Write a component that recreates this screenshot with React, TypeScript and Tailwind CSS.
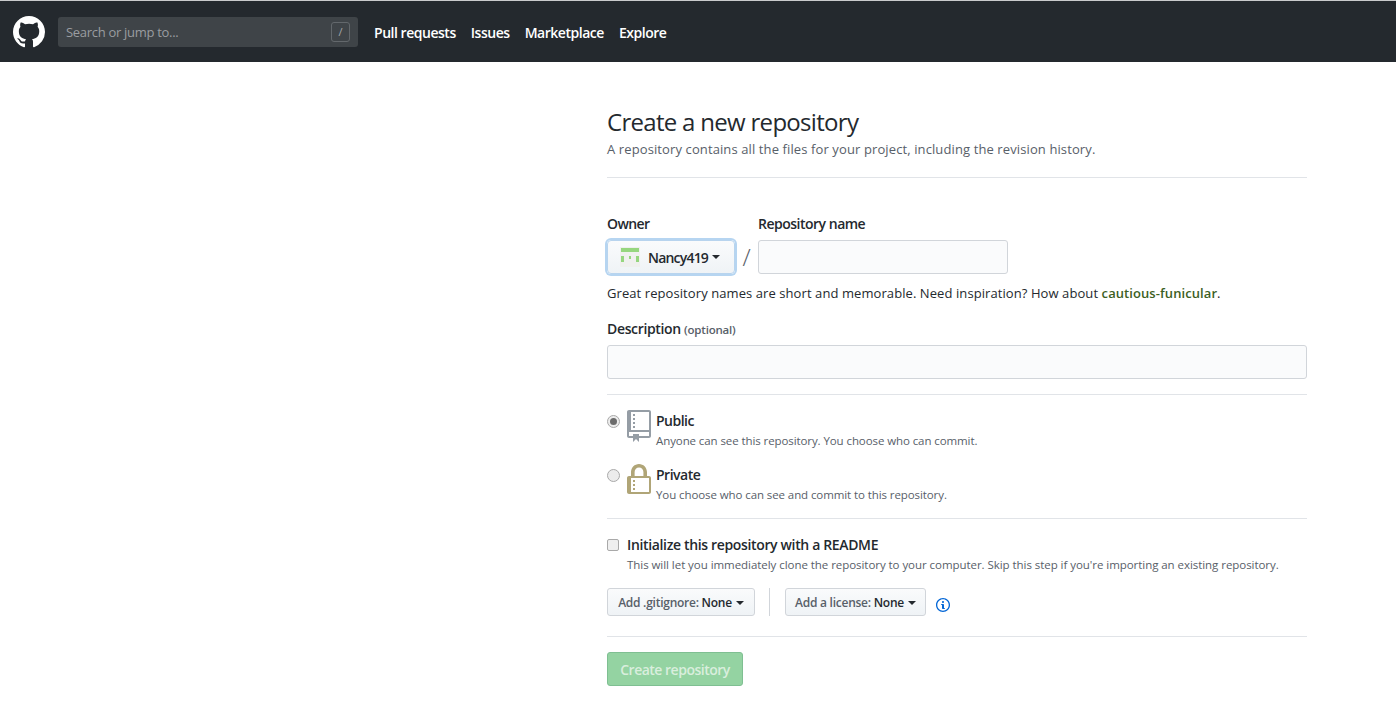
import React from 'react';

const font = { fontFamily: '"Open Sans", sans-serif' };

const Caret = () => (
  <span className="inline-block ml-1 w-0 h-0 border-x-4 border-t-4 border-x-transparent border-t-[#24292e] align-middle" />
);

const Divider = () => <hr className="border-0 border-t border-[#e1e4e8]" />;

const GithubMark = () => (
  <svg viewBox="0 0 16 16" className="w-8 h-8" fill="#ffffff">
    <path d="M8 0C3.58 0 0 3.58 0 8c0 3.54 2.29 6.53 5.47 7.59.4.07.55-.17.55-.38 0-.19-.01-.82-.01-1.49-2.01.37-2.53-.49-2.69-.94-.09-.23-.48-.94-.82-1.13-.28-.15-.68-.52-.01-.53.63-.01 1.08.58 1.23.82.72 1.21 1.87.87 2.33.66.07-.52.28-.87.51-1.07-1.78-.2-3.64-.89-3.64-3.95 0-.87.31-1.59.82-2.15-.08-.2-.36-1.02.08-2.12 0 0 .67-.21 2.2.82.64-.18 1.32-.27 2-.27.68 0 1.36.09 2 .27 1.53-1.04 2.2-.82 2.2-.82.44 1.1.16 1.92.08 2.12.51.56.82 1.27.82 2.15 0 3.07-1.87 3.75-3.65 3.95.29.25.54.73.54 1.48 0 1.07-.01 1.93-.01 2.2 0 .21.15.46.55.38A8.013 8.013 0 0016 8c0-4.42-3.58-8-8-8z" />
  </svg>
);

const RepoIcon = () => (
  <svg viewBox="0 0 12 16" className="w-6 h-8" fill="#959da5">
    <path d="M4 9H3V8h1v1zm0-3H3v1h1V6zm0-2H3v1h1V4zm0-2H3v1h1V2zm8-1v12c0 .55-.45 1-1 1H6v2l-1.5-1.5L3 16v-2H1c-.55 0-1-.45-1-1V1c0-.55.45-1 1-1h10c.55 0 1 .45 1 1zm-1 10H1v2h2v-1h3v1h5v-2zm0-10H2v9h9V1z" />
  </svg>
);

const LockIcon = () => (
  <svg viewBox="0 0 12 16" className="w-6 h-8" fill="#b0a577">
    <path d="M4 13H3v-1h1v1zm8-6v7c0 .55-.45 1-1 1H1c-.55 0-1-.45-1-1V7c0-.55.45-1 1-1h1V4c0-2.2 1.8-4 4-4s4 1.8 4 4v2h1c.55 0 1 .45 1 1zM3.8 6h4.41V4c0-1.22-.98-2.2-2.2-2.2-1.22 0-2.2.98-2.2 2.2v2H3.8zM11 7H2v7h9V7zM4 8H3v1h1V8zm0 2H3v1h1v-1z" />
  </svg>
);

const InfoIcon = () => (
  <svg viewBox="0 0 14 16" className="w-[14px] h-4" fill="#0366d6">
    <path d="M6.3 5.69a.942.942 0 01-.28-.7c0-.28.09-.52.28-.7.19-.18.42-.28.7-.28.28 0 .52.09.7.28.18.19.28.42.28.7 0 .28-.09.52-.28.7a1 1 0 01-.7.3c-.28 0-.52-.11-.7-.3zM8 7.99c-.02-.25-.11-.48-.31-.69-.2-.19-.42-.3-.69-.31H6c-.27.02-.48.13-.69.31-.2.2-.3.44-.31.69h1v3c.02.27.11.5.31.69.2.2.42.31.69.31h1c.27 0 .48-.11.69-.31.2-.19.3-.42.31-.69H8V7.98v.01zM7 2.3c-3.14 0-5.7 2.54-5.7 5.68 0 3.14 2.56 5.7 5.7 5.7s5.7-2.55 5.7-5.7c0-3.15-2.56-5.69-5.7-5.69v.01zM7 .98c3.86 0 7 3.14 7 7s-3.14 7-7 7-7-3.12-7-7 3.14-7 7-7z" />
  </svg>
);

const OwnerAvatar = () => (
  <svg viewBox="0 0 20 20" className="w-5 h-5">
    <rect width="20" height="20" fill="#f0f0ee" />
    <rect x="1" y="1" width="18" height="4" fill="#96d67e" />
    <rect x="1" y="9" width="3" height="6" fill="#96d67e" />
    <rect x="9" y="9" width="2" height="3" fill="#96d67e" />
    <rect x="16" y="9" width="3" height="6" fill="#96d67e" />
  </svg>
);

const HeaderNav = () => (
  <header className="h-[62px] box-border border-t border-[#c9cbcc] pt-px bg-[#24292e] flex items-center pl-[13px]">
    <GithubMark />
    <div className="ml-[13px] w-[300px] h-[30px] bg-[#3f4448] rounded-[3px] flex items-center justify-between pl-2 pr-2">
      <span className="pt-px text-[13px] text-[#9a9da0] tracking-[-0.3px]">Search or jump to...</span>
      <span className="w-[19px] h-5 border border-[#63686c] rounded-[3px] text-[11px] text-[#a3a6a9] flex items-center justify-center">/</span>
    </div>
    <nav className="ml-4 pt-px flex gap-[15px] text-[14px] font-semibold text-white tracking-[-0.47px]">
      <span>Pull requests</span>
      <span>Issues</span>
      <span>Marketplace</span>
      <span>Explore</span>
    </nav>
  </header>
);

const OptionRow = ({ checked, icon, title, desc }: { checked?: boolean; icon: React.ReactNode; title: string; desc: string }) => (
  <div className="flex h-[36px]">
    <span className="mt-[5px] w-[13px] h-[13px] rounded-full border border-[#a9a9a9] bg-[#ececec] flex items-center justify-center">
      {checked && <span className="w-[7px] h-[7px] rounded-full bg-[#6b6b6b]" />}
    </span>
    <span className="ml-[7px] w-6">{icon}</span>
    <div className="ml-[5px] pt-px">
      <div className="text-[14px] leading-[20px] font-semibold text-[#24292e] tracking-[-0.5px]">{title}</div>
      <div className="text-[11.5px] leading-[19px] text-[#586069] tracking-[-0.09px]">{desc}</div>
    </div>
  </div>
);

const SelectButton = ({ label, value, w }: { label: string; value: string; w: string }) => (
  <button className={`${w} h-7 pt-px rounded-[3px] border border-[#d1d5da] bg-gradient-to-b from-[#fafbfc] to-[#eff3f6] text-[12px] font-semibold text-[#586069] tracking-[-0.25px] whitespace-nowrap`}>
    {label} <span className="text-[#24292e]">{value}</span>
    <Caret />
  </button>
);

export default function App() {
  return (
    <div className="min-h-[708px] bg-white" style={font}>
      <HeaderNav />
      <main className="w-[700px] ml-[607px]">
        <div className="pt-[44px] pb-[18px] border-b border-[#e1e4e8]">
          <h1 className="text-[24px] leading-[32px] text-[#24292e] tracking-[-0.7px]">Create a new repository</h1>
          <p className="mt-px text-[13px] leading-[20px] text-[#586069] tracking-[0.11px]">A repository contains all the files for your project, including the revision history.</p>
        </div>

        <div className="mt-[35px] flex">
          <div className="w-[128px]">
            <div className="text-[14px] leading-[21px] font-semibold text-[#24292e] tracking-[-0.6px]">Owner</div>
            <button className="mt-[6px] w-[128px] h-[34px] rounded-[4px] border-[1px] border-[#b8d4ee] shadow-[0_0_0_2px_#b6d5f1] bg-gradient-to-b from-[#fafbfc] to-[#eff3f6] flex items-center pl-[12px] text-[14px] font-semibold text-[#24292e] tracking-[-0.8px]">
              <OwnerAvatar />
              <span className="ml-[8px]">Nancy419</span>
              <Caret />
            </button>
          </div>
          <div className="w-[23px] mt-[26px] text-[24px] leading-[35px] text-[#586069] font-light text-center">/</div>
          <div>
            <div className="text-[14px] leading-[21px] font-semibold text-[#24292e] tracking-[-0.5px]">Repository name</div>
            <input className="mt-[6px] block w-[250px] h-[34px] rounded-[3px] border border-[#d1d5da] bg-[#fafbfc]" />
          </div>
        </div>

        <p className="mt-[9px] text-[13px] leading-[20px] text-[#24292e] tracking-[0.08px]">
          Great repository names are short and memorable. Need inspiration? How about <strong className="font-semibold text-[#3d5f1f]">cautious-funicular</strong>.
        </p>

        <div className="mt-[15px] text-[14px] leading-[21px] font-semibold text-[#24292e] tracking-[-0.35px]">
          Description <span className="text-[11.5px] text-[#586069] tracking-[-0.2px]">(optional)</span>
        </div>
        <input className="mt-[5px] block w-[700px] h-[34px] rounded-[3px] border border-[#d1d5da] bg-[#fafbfc]" />

        <div className="mt-[15px]"><Divider /></div>

        <div className="mt-[15px] flex flex-col gap-[18px]">
          <OptionRow checked icon={<RepoIcon />} title="Public" desc="Anyone can see this repository. You choose who can commit." />
          <OptionRow icon={<LockIcon />} title="Private" desc="You choose who can see and commit to this repository." />
        </div>

        <div className="mt-[18px]"><Divider /></div>

        <div className="mt-[16px] flex">
          <span className="mt-[4px] w-3 h-3 rounded-[2px] border border-[#a9a9a9] bg-[#efefef]" />
          <div className="ml-2">
            <div className="text-[14px] leading-[20px] font-semibold text-[#24292e] tracking-[-0.35px]">Initialize this repository with a README</div>
            <div className="text-[11.5px] leading-[20px] text-[#586069] tracking-[-0.05px]">This will let you immediately clone the repository to your computer. Skip this step if you're importing an existing repository.</div>
          </div>
        </div>

        <div className="mt-[13px] flex items-center">
          <SelectButton w="w-[148px]" label="Add .gitignore:" value="None" />
          <span className="ml-[14px] mr-[15px] w-px h-7 bg-[#d1d5da]" />
          <SelectButton w="w-[141px]" label="Add a license:" value="None" />
          <span className="ml-[10px] mt-[6px] flex"><InfoIcon /></span>
        </div>

        <div className="mt-[20px]"><Divider /></div>

        <button className="mt-[15px] w-[136px] h-[34px] rounded-[3px] border border-[#7fbf92] bg-[#94d3a2] text-[14px] font-semibold text-[#d9eedd] tracking-[-0.5px]">
          Create repository
        </button>
      </main>
    </div>
  );
}
